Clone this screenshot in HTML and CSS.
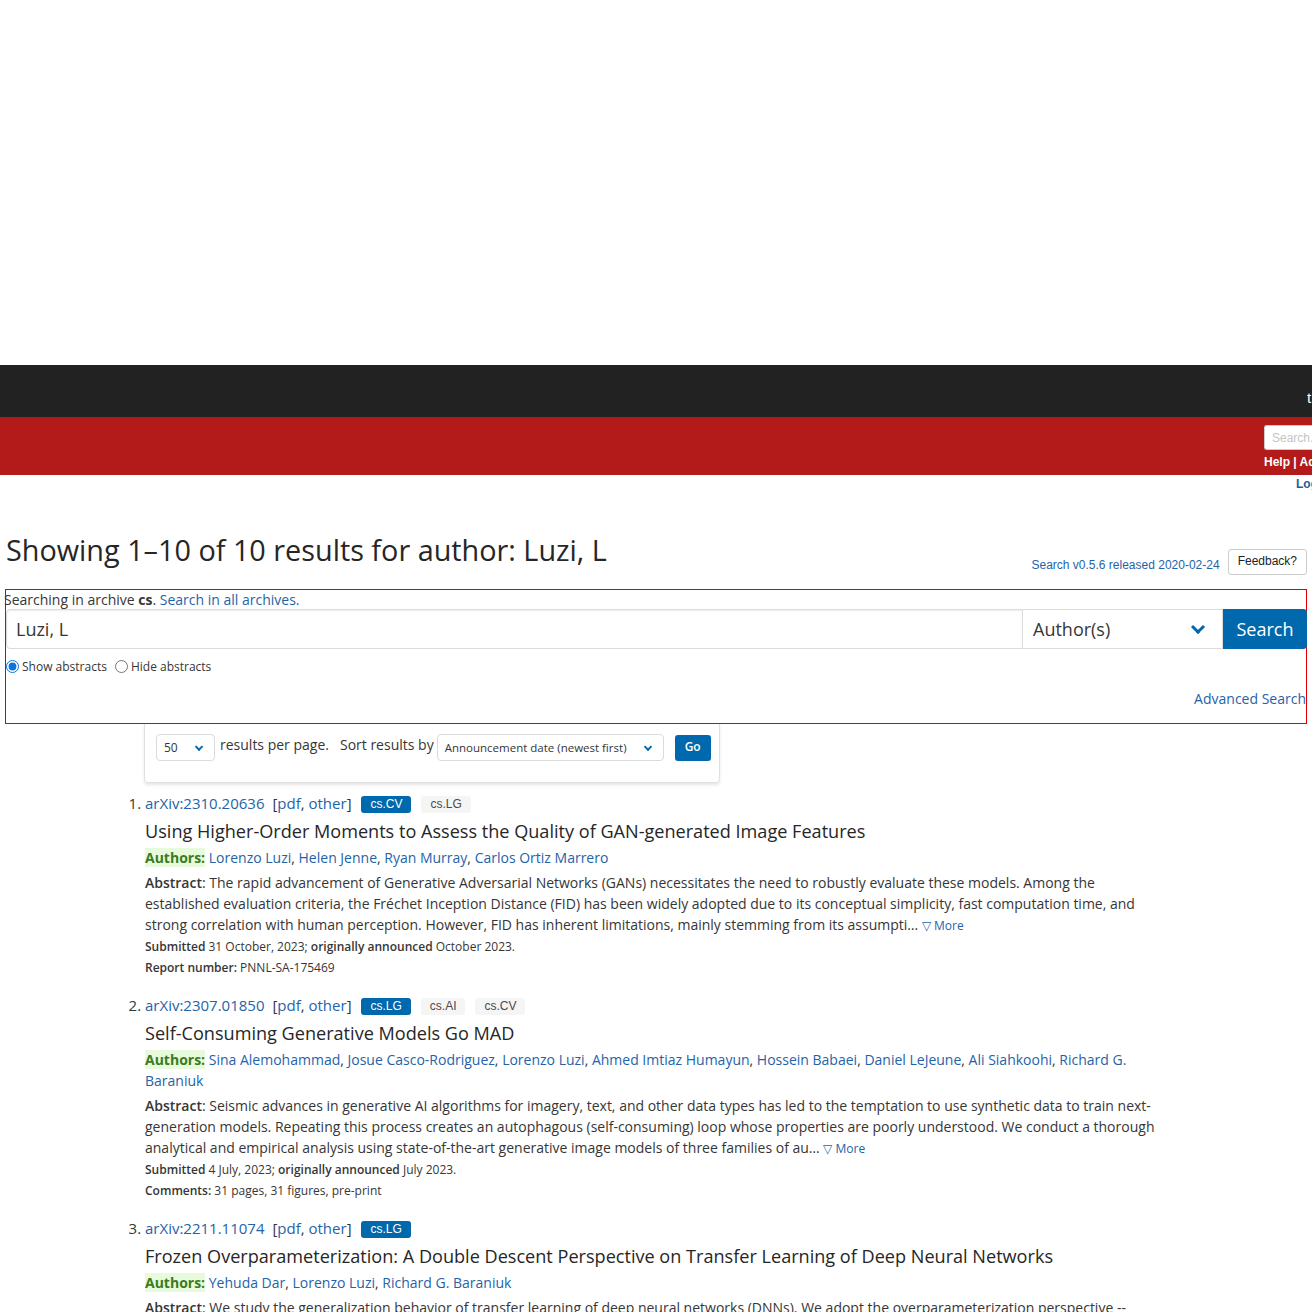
FILE: index.html
```html
<!DOCTYPE html>
<html>
<head>
<meta charset="utf-8">
<link rel="stylesheet" href="styles.css">
</head>
<body>
<div class="page">
  <div class="blank"></div>
  <header>
    <div class="masthead"><span class="support">the</span></div>
    <div class="redbar">
      <div class="mini-search">
        <div class="mini-input">Search...</div>
        <div class="mini-links">Help | Advanced Search</div>
      </div>
    </div>
    <div class="login-row"><a class="login">Login</a></div>
  </header>

  <main>
    <div class="title-row">
      <h1 class="page-title">Showing 1&ndash;10 of 10 results for author: Luzi, L</h1>
      <div class="version">
        <a class="version-link">Search v0.5.6 released 2020-02-24</a>
        <span class="feedback">Feedback?</span>
      </div>
    </div>

    <div class="search-box">
      <div class="archive-line">Searching in archive <b>cs</b>. <a>Search in all archives.</a></div>
      <div class="search-row">
        <div class="query">Luzi, L</div>
        <div class="field-select">Author(s)<span class="chev big"></span></div>
        <div class="search-btn">Search</div>
      </div>
      <div class="radios">
        <label><input type="radio" name="abs" checked> Show abstracts</label>
        <label><input type="radio" name="abs"> Hide abstracts</label>
      </div>
      <div class="adv-row"><a>Advanced Search</a></div>
    </div>

    <div class="options-box">
      <div class="small-select size">50<span class="chev"></span></div>
      <span class="opt-text">results per page.</span>
      <span class="opt-text sort">Sort results by</span>
      <div class="small-select order">Announcement date (newest first)<span class="chev"></span></div>
      <div class="go-btn">Go</div>
    </div>

    <ol class="results">
      <li>
        <p class="list-title"><a>arXiv:2310.20636</a> <span class="fmt">[<a>pdf</a>, <a>other</a>]</span> <span class="tag primary">cs.CV</span><span class="tag">cs.LG</span></p>
        <p class="title">Using Higher-Order Moments to Assess the Quality of GAN-generated Image Features</p>
        <p class="authors"><span class="hl">Authors:</span> <a>Lorenzo Luzi</a>, <a>Helen Jenne</a>, <a>Ryan Murray</a>, <a>Carlos Ortiz Marrero</a></p>
        <p class="abstract"><b>Abstract</b>: The rapid advancement of Generative Adversarial Networks (GANs) necessitates the need to robustly evaluate these models. Among the established evaluation criteria, the Fr&eacute;chet Inception Distance (FID) has been widely adopted due to its conceptual simplicity, fast computation time, and strong correlation with human perception. However, FID has inherent limitations, mainly stemming from its assumpti&hellip; <a class="more">&#9661; More</a></p>
        <p class="meta"><b>Submitted</b> 31 October, 2023; <b>originally announced</b> October 2023.</p>
        <p class="meta"><b>Report number:</b> PNNL-SA-175469</p>
      </li>
      <li>
        <p class="list-title"><a>arXiv:2307.01850</a> <span class="fmt">[<a>pdf</a>, <a>other</a>]</span> <span class="tag primary">cs.LG</span><span class="tag">cs.AI</span><span class="tag">cs.CV</span></p>
        <p class="title">Self-Consuming Generative Models Go MAD</p>
        <p class="authors"><span class="hl">Authors:</span> <a>Sina Alemohammad</a>, <a>Josue Casco-Rodriguez</a>, <a>Lorenzo Luzi</a>, <a>Ahmed Imtiaz Humayun</a>, <a>Hossein Babaei</a>, <a>Daniel LeJeune</a>, <a>Ali Siahkoohi</a>, <a>Richard G. Baraniuk</a></p>
        <p class="abstract"><b>Abstract</b>: Seismic advances in generative AI algorithms for imagery, text, and other data types has led to the temptation to use synthetic data to train next-generation models. Repeating this process creates an autophagous (self-consuming) loop whose properties are poorly understood. We conduct a thorough analytical and empirical analysis using state-of-the-art generative image models of three families of au&hellip; <a class="more">&#9661; More</a></p>
        <p class="meta"><b>Submitted</b> 4 July, 2023; <b>originally announced</b> July 2023.</p>
        <p class="meta"><b>Comments:</b> 31 pages, 31 figures, pre-print</p>
      </li>
      <li>
        <p class="list-title"><a>arXiv:2211.11074</a> <span class="fmt">[<a>pdf</a>, <a>other</a>]</span> <span class="tag primary">cs.LG</span></p>
        <p class="title">Frozen Overparameterization: A Double Descent Perspective on Transfer Learning of Deep Neural Networks</p>
        <p class="authors"><span class="hl">Authors:</span> <a>Yehuda Dar</a>, <a>Lorenzo Luzi</a>, <a>Richard G. Baraniuk</a></p>
        <p class="abstract"><b>Abstract</b>: We study the generalization behavior of transfer learning of deep neural networks (DNNs). We adopt the overparameterization perspective -- featuring interpolation of the training data (i.e., approximately zero train error) and the double descent phenomenon -- to explain the delicate effect of the transfer learning setting on generalization performance.</p>
      </li>
    </ol>
  </main>
</div>
</body>
</html>
```
FILE: styles.css
```css
html, body {
  margin: 0;
  padding: 0;
  background: #fff;
}
body {
  font-family: "Open Sans", "Liberation Sans", sans-serif;
  color: #363636;
  width: 1312px;
  overflow: hidden;
}
a { color: #1f63a8; text-decoration: none; }
p { margin: 0; }

.blank { height: 365px; }

/* header */
.masthead {
  height: 52px;
  background: #222222;
  padding-left: 1307px;
  white-space: nowrap;
  overflow: hidden;
  box-sizing: border-box;
}
.support {
  display: inline-block;
  margin-top: 24px;
  font-family: "Liberation Sans", Arial, sans-serif;
  font-size: 15px;
  color: #fff;
  line-height: 18px;
}
.redbar {
  height: 58px;
  background: #b31b1b;
  padding-left: 1264px;
  box-sizing: border-box;
  overflow: hidden;
  white-space: nowrap;
}
.mini-search { padding-top: 8px; }
.mini-input {
  width: 120px;
  height: 25px;
  box-sizing: border-box;
  background: #fff;
  border: 1px solid #ccc;
  border-right: none;
  border-radius: 3px 0 0 3px;
  font-family: "Liberation Sans", Arial, sans-serif;
  font-size: 12px;
  color: #c4c4c4;
  padding: 5px 0 0 7px;
}
.mini-links {
  margin-top: 5px;
  font-family: "Liberation Sans", Arial, sans-serif;
  font-size: 12px;
  font-weight: bold;
  color: #fff;
  line-height: 14px;
}
.login-row {
  padding-left: 1296px;
  white-space: nowrap;
  overflow: hidden;
  height: 20px;
  padding-top: 2px;
  font-size: 12px;
  line-height: 14px;
}
.login {
  font-family: "Liberation Sans", Arial, sans-serif;
  font-size: 12px;
  font-weight: bold;
  color: #1f5e96;
}

/* title */
.title-row {
  display: flex;
  align-items: flex-end;
  justify-content: space-between;
  padding: 0 0 0 6px;
  margin-top: 36px;
  width: 1307px;
  box-sizing: border-box;
}
.page-title {
  margin: 0;
  font-size: 28.8px;
  font-weight: 400;
  line-height: 34px;
  color: #262626;
}
.version {
  display: flex;
  align-items: center;
  gap: 8px;
  margin-bottom: -8px;
  font-family: "Liberation Sans", Arial, sans-serif;
  font-size: 12px;
}
.version-link { color: #1f63a8; margin-top: 5px; }
.feedback {
  border: 1px solid #ccc;
  border-radius: 3px;
  padding: 4px 9px 5px;
  color: #222;
  line-height: 15px;
}

/* search box */
.search-box {
  margin: 22px 0 0 5px;
  width: 1302px;
  height: 135px;
  box-sizing: border-box;
  border: 1px solid #e00000;
}
.archive-line {
  font-size: 14px;
  line-height: 19px;
  color: #363636;
  margin-left: -2px;
}
.archive-line b { font-weight: 700; }
.search-row {
  display: flex;
  height: 40px;
}
.query {
  flex-shrink: 0;
  width: 1017px;
  box-sizing: border-box;
  border: 1px solid #dbdbdb;
  border-radius: 4px 0 0 4px;
  font-size: 18px;
  padding: 0 9px;
  line-height: 38px;
  color: #363636;
  box-shadow: inset 0 1px 2px rgba(10,10,10,0.08);
}
.field-select {
  flex-shrink: 0;
  position: relative;
  width: 200px;
  box-sizing: border-box;
  border: 1px solid #dbdbdb;
  border-left: none;
  font-size: 18px;
  line-height: 38px;
  padding-left: 10px;
  color: #363636;
}
.search-btn {
  flex-shrink: 0;
  width: 84px;
  background: #0068ac;
  color: #fff;
  font-size: 18px;
  line-height: 40px;
  text-align: center;
  border-radius: 0 4px 4px 0;
}
.chev {
  position: absolute;
  right: 12px;
  top: 50%;
  width: 5px;
  height: 5px;
  border-right: 2px solid #0068ac;
  border-bottom: 2px solid #0068ac;
  transform: translateY(-70%) rotate(45deg);
}
.chev.big {
  right: 19px;
  width: 7px;
  height: 7px;
  border-width: 3px;
}
.radios {
  display: flex;
  gap: 8px;
  font-size: 12px;
  margin-top: 9px;
  height: 17px;
  align-items: center;
}
.radios label { display: flex; align-items: center; }
.radios input {
  margin: 0 3px 0 0;
  width: 13px;
  height: 13px;
  accent-color: #0a74da;
}
.adv-row {
  text-align: right;
  margin-top: 14px;
  font-size: 14px;
  line-height: 20px;
}

/* options box */
.options-box {
  position: relative;
  margin-left: 144px;
  width: 576px;
  height: 59px;
  box-sizing: border-box;
  border: 1px solid #e0e0e0;
  border-top: none;
  border-radius: 0 0 4px 4px;
  box-shadow: 0 2px 3px rgba(10,10,10,0.1);
  display: flex;
  align-items: flex-start;
  padding: 10px 0 0 11px;
}
.small-select {
  position: relative;
  height: 27px;
  box-sizing: border-box;
  border: 1px solid #dbdbdb;
  border-radius: 4px;
  font-size: 12px;
  line-height: 25px;
  padding-left: 7px;
  color: #363636;
}
.small-select.size { width: 59px; }
.small-select.order { width: 227px; font-size: 11.5px; }
.small-select .chev { right: 12px; width: 4px; height: 4px; }
.opt-text {
  font-size: 14px;
  line-height: 22px;
  margin-left: 5px;
}
.opt-text.sort { margin-left: 11px; margin-right: 3px; }
.go-btn {
  margin-left: 11px;
  margin-top: 1px;
  width: 36px;
  height: 26px;
  background: #0068ac;
  color: #fff;
  border-radius: 3px;
  font-size: 12px;
  font-weight: 600;
  text-align: center;
  line-height: 24px;
}

/* results */
.results {
  margin: 9px 0 0 145px;
  padding: 0;
  width: 1016px;
}
.results li {
  margin-bottom: 16px;
  font-size: 14px;
}
.results li::marker {
  font-size: 15px;
  color: #363636;
}
.list-title {
  font-size: 15px;
  line-height: 22px;
  margin-bottom: 5px;
}
.fmt { margin-left: 4px; margin-right: 4px; color: #363636; }
.tag {
  display: inline-block;
  font-family: "Liberation Sans", Arial, sans-serif;
  font-size: 12px;
  line-height: 17px;
  padding: 0 9px;
  border-radius: 3px;
  background: #f5f5f5;
  color: #4a4a4a;
  margin-left: 10px;
  vertical-align: 1px;
}
.tag.primary { background: #0068ac; color: #fff; margin-left: 2px; }
.title {
  font-size: 18.1px;
  line-height: 24px;
  margin-bottom: 4px;
  color: #262626;
}
.authors {
  font-size: 14px;
  line-height: 21px;
  margin-bottom: 4px;
}
.hl {
  background: #e7fbdc;
  color: #3a7b1f;
  font-weight: 700;
}
.abstract {
  font-size: 14px;
  line-height: 21px;
}
.abstract b { font-weight: 600; }
.more { font-size: 12px; }
.meta {
  font-size: 12px;
  line-height: 21px;
}
.meta b { font-weight: 600; }
```
